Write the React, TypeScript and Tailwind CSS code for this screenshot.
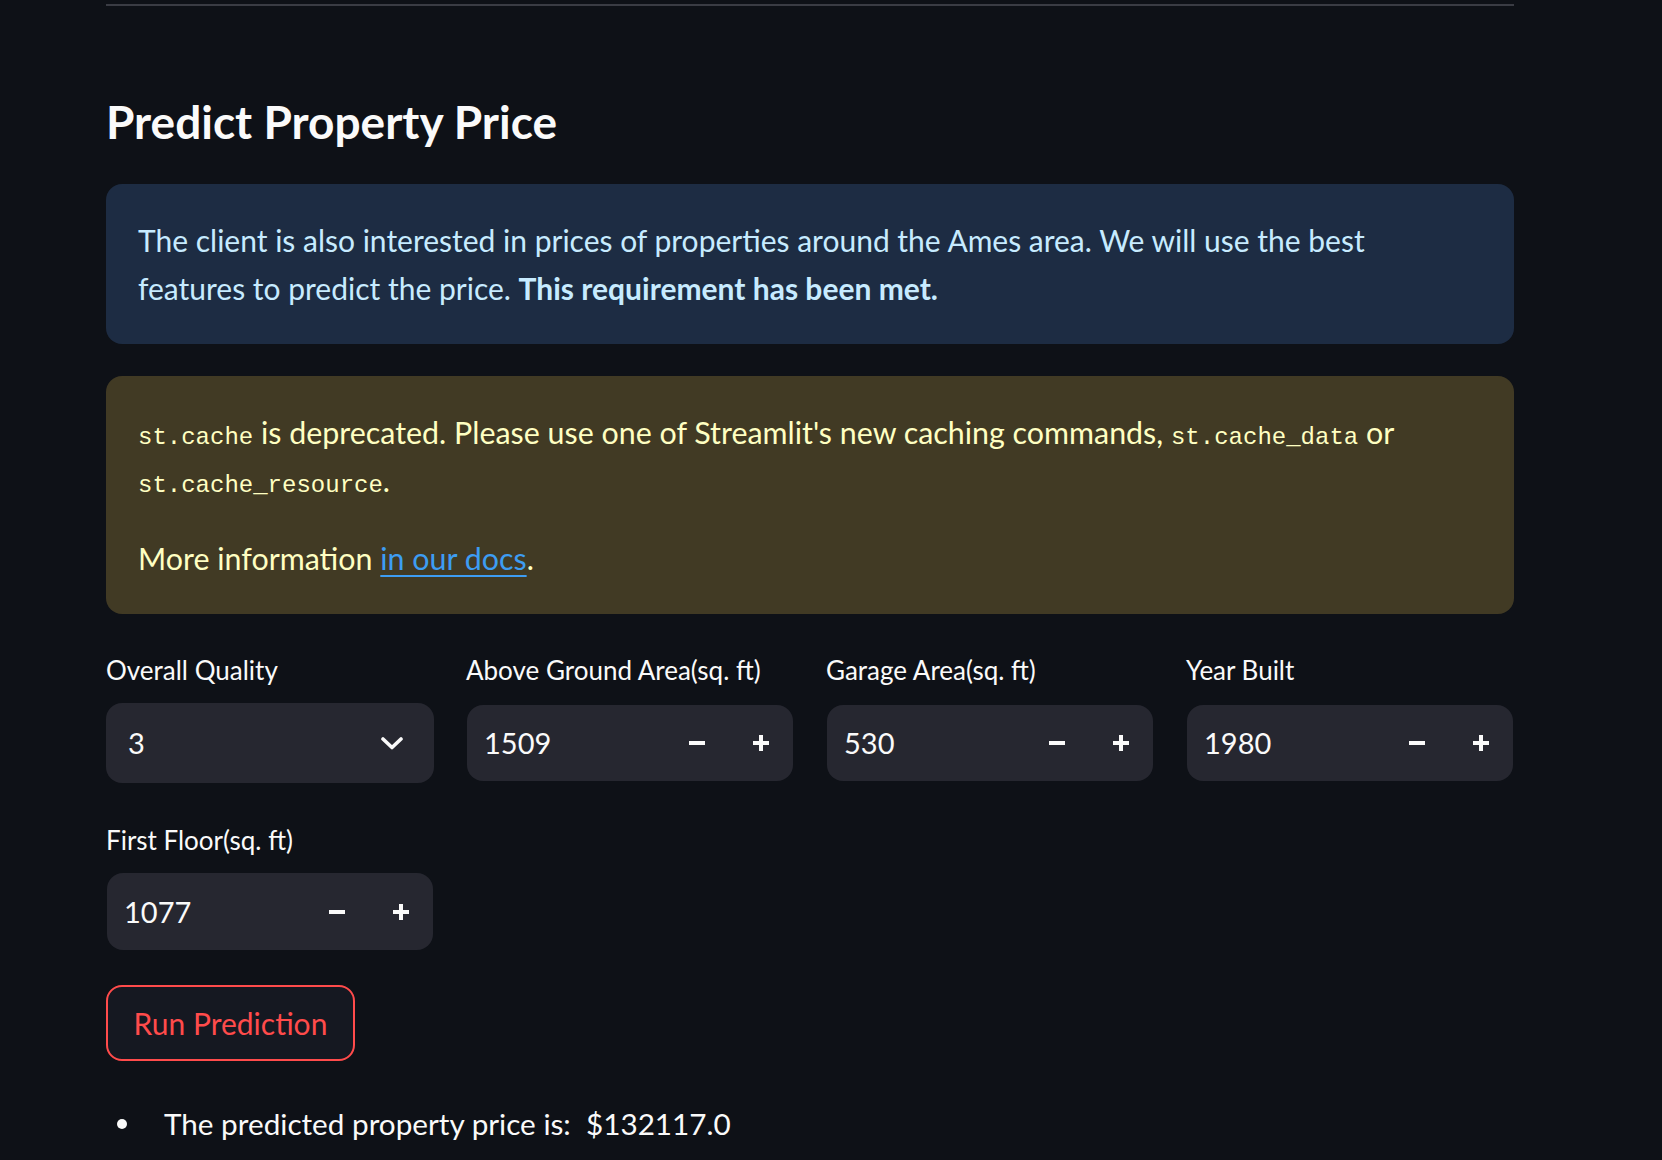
import React from 'react';

const sans = "font-['Lato','Noto_Sans',sans-serif]";
const mono = "font-['Liberation_Mono','DejaVu_Sans_Mono',monospace] text-[24px] leading-[1]";

const Chevron = () => (
  <svg width="22" height="13" viewBox="0 0 22 13" fill="none">
    <path d="M2 2l9 8.5L20 2" stroke="#fafafa" strokeWidth="3.6" strokeLinecap="round" strokeLinejoin="round" />
  </svg>
);

const Minus = () => (
  <svg width="16" height="16" viewBox="0 0 16 16">
    <rect x="0" y="6" width="16" height="4" fill="#fafafa" />
  </svg>
);

const Plus = () => (
  <svg width="16" height="16" viewBox="0 0 16 16">
    <rect x="0" y="6" width="16" height="4" fill="#fafafa" />
    <rect x="6" y="0" width="4" height="16" fill="#fafafa" />
  </svg>
);

const Label = ({ children }: { children: React.ReactNode }) => (
  <div className="h-[36px] text-[26px] leading-[36px] text-[#fafafa]">{children}</div>
);

const Stepper = ({ value, height }: { value: string; height: string }) => (
  <div className={`mx-[1px] flex items-center rounded-[16px] bg-[#262730] pl-[17px] ${height}`}>
    <span className="flex-1 text-[29px] text-[#fafafa]">{value}</span>
    <button className="flex h-full w-[64px] items-center justify-center">
      <Minus />
    </button>
    <button className="flex h-full w-[64px] items-center justify-center">
      <Plus />
    </button>
  </div>
);

const Field = ({ label, value }: { label: string; value: string }) => (
  <div className="flex flex-col">
    <Label>{label}</Label>
    <div className="mt-[17px]">
      <Stepper value={value} height="h-[76px]" />
    </div>
  </div>
);

export default function App() {
  return (
    <div className={`min-h-[1160px] w-full bg-[#0e1117] ${sans}`}>
      <div className="ml-[106px] w-[1408px] pt-[4px]">
        <div className="h-[2px] bg-[#3a3c44]" />

        <h2 className="mt-[88px] h-[56px] text-[46px] font-bold leading-[56px] text-[#fafafa]">
          Predict Property Price
        </h2>

        <div className="mt-[34px] rounded-[16px] bg-[#1d2c43] px-[32px] py-[32px] text-[30px] leading-[48px] text-[#c7ebff]">
          The client is also interested in prices of properties around the Ames area. We will use the best
          <br />
          features to predict the price. <span className="font-bold">This requirement has been met.</span>
        </div>

        <div className="mt-[32px] rounded-[16px] bg-[#413a24] px-[32px] py-[32px] text-[30.4px] text-[#ffffc2]">
          <p className="leading-[48px]">
            <span className={mono}>st.cache</span> is deprecated. Please use one of Streamlit's new caching commands,{' '}
            <span className={mono}>st.cache_data</span> or
            <br />
            <span className={mono}>st.cache_resource</span>.
          </p>
          <p className="mt-[30px] leading-[48px]">
            More information{' '}
            <a href="#" className="text-[#3d9df3] underline decoration-[2px] underline-offset-[5px]">
              in our docs
            </a>
            .
          </p>
        </div>

        <div className="mt-[38px] grid grid-cols-4 gap-x-[32px]">
          <div className="flex flex-col">
            <Label>Overall Quality</Label>
            <div className="mt-[15px] flex h-[80px] items-center justify-between rounded-[16px] bg-[#262730] pl-[22px] pr-[31px]">
              <span className="text-[29px] text-[#fafafa]">3</span>
              <Chevron />
            </div>
          </div>
          <Field label="Above Ground Area(sq. ft)" value="1509" />
          <Field label="Garage Area(sq. ft)" value="530" />
          <Field label="Year Built" value="1980" />
        </div>

        <div className="mt-[39px] grid grid-cols-4 gap-x-[32px]">
          <div className="flex flex-col">
            <Label>First Floor(sq. ft)</Label>
            <div className="mt-[15px]">
              <Stepper value="1077" height="h-[77px]" />
            </div>
          </div>
        </div>

        <button className="mt-[35px] flex h-[76px] w-[249px] items-center justify-center rounded-[16px] border-2 border-[#ff4b4b] bg-[#151821] text-[30px] text-[#ff4b4b]">
          Run Prediction
        </button>

        <ul className="mt-[39px] pl-[58px] text-[29.7px] leading-[48px] text-[#fafafa]">
          <li className="relative">
            <span className="absolute left-[-47px] top-[19px] h-[10px] w-[10px] rounded-full bg-[#fafafa]" />
            The predicted property price is:&nbsp; $132117.0
          </li>
        </ul>
      </div>
    </div>
  );
}
